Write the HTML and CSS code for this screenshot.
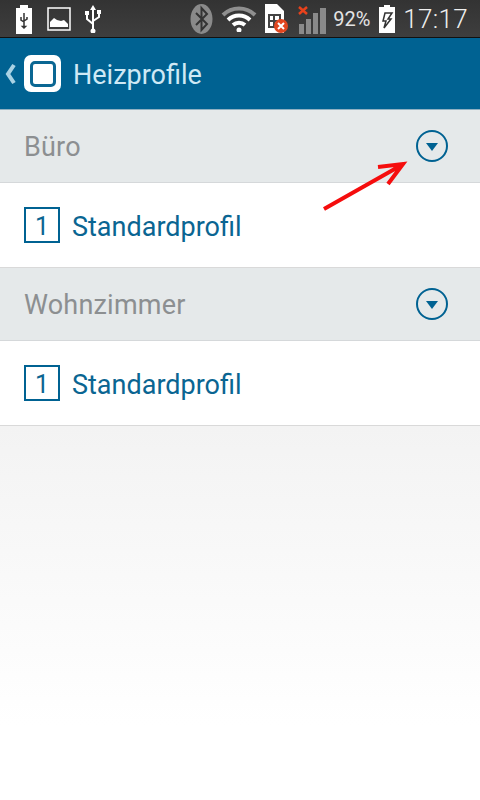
FILE: index.html
```html
<!DOCTYPE html>
<html lang="de">
<head>
    <meta charset="UTF-8">
    <meta name="viewport" content="width=device-width, initial-scale=1.0">
    <title>Heizprofile</title>
    <link rel="stylesheet" href="styles.css">
</head>
<body>
    <div class="statusbar">
        <div class="status-left">
            <svg width="18" height="30" viewBox="0 0 18 30"><path d="M5 1h8v3h4v26H1V4h4z" fill="#fff"/><path d="M9 9v15M9 24l-1.500-1.500h3zM6 13v3l3 2M12 13v2l-3 2" stroke="#333" stroke-width="1.500" fill="none"/></svg>
            <svg width="24" height="24" viewBox="0 0 24 24"><rect x="1" y="1" width="22" height="22" fill="none" stroke="#fff" stroke-width="1.500"/><path d="M3 20v-5l4-4 3 2 4 1 3-1 4 4v3z" fill="#fff"/></svg>
            <svg width="16" height="28" viewBox="0 0 16 28"><path d="M8 2v24M8 19L2 14V9M8 16l6-4V8" stroke="#fff" stroke-width="2" fill="none"/><path d="M8 0l-3 5h6z" fill="#fff"/><rect x="0" y="6" width="4" height="4" fill="#fff"/><rect x="12" y="5" width="4" height="4" fill="#fff"/><circle cx="8" cy="26" r="2.500" fill="#fff"/></svg>
        </div>
        <div class="status-right">
            <svg class="bt" width="23" height="30" viewBox="0 0 23 30"><ellipse cx="11.500" cy="15" rx="11" ry="15" fill="#8a8a8a"/><path d="M6 9l11 11-5.500 6V4l5.500 6L6 21" stroke="#333" stroke-width="2" fill="none"/></svg>
            <svg width="36" height="26" viewBox="0 0 36 26"><path d="M2 9a23 23 0 0 1 32 0" stroke="#8f8f8f" stroke-width="4" fill="none"/><path d="M7 14a16 16 0 0 1 22 0" stroke="#fff" stroke-width="4" fill="none"/><path d="M12 19a9 9 0 0 1 12 0" stroke="#fff" stroke-width="4" fill="none"/><circle cx="18" cy="24" r="2.500" fill="#fff"/></svg>
            <svg width="26" height="30" viewBox="0 0 26 30"><path d="M1 0h12l7 7v22H1z" fill="#fff"/><path d="M5 11h11v12H5zM5 17h11M10 11v12" stroke="#444" stroke-width="2" fill="none"/><circle cx="17" cy="22" r="7" fill="#e2461f"/><path d="M14 19l6 6M20 19l-6 6" stroke="#fff" stroke-width="2"/></svg>
            <svg class="signal" width="29" height="30" viewBox="0 0 29 30"><g fill="#8a8a8a"><rect x="1" y="20" width="5" height="10"/><rect x="8" y="15" width="5" height="15"/><rect x="15" y="9" width="5" height="21"/><rect x="22" y="4" width="6" height="26"/></g><path d="M1 3l8 7M9 3l-8 7" stroke="#e8421c" stroke-width="2.500"/></svg>
            <span class="battery-pct">92%</span>
            <svg width="16" height="28" viewBox="0 0 16 28"><path d="M5 0h6v2h5v26H0V2h5z" fill="#fff"/><path d="M6 8h7l-4 6h3l-7 9 2-7H4z" fill="none" stroke="#333" stroke-width="1.500"/></svg>
            <span class="clock">17:17</span>
        </div>
    </div>

    <header class="appbar">
        <svg class="back" width="12" height="22" viewBox="0 0 12 22"><path d="M9 2L3 11l6 9" stroke="#a9d2e4" stroke-width="4" fill="none"/></svg>
        <div class="logo"><div class="logo-inner"></div></div>
        <h1>Heizprofile</h1>
    </header>

    <section class="room">
        <span class="room-name">Büro</span>
        <span class="toggle"></span>
    </section>
    <div class="profile">
        <span class="profile-num">1</span>
        <span class="profile-name">Standardprofil</span>
    </div>

    <section class="room">
        <span class="room-name">Wohnzimmer</span>
        <span class="toggle"></span>
    </section>
    <div class="profile">
        <span class="profile-num">1</span>
        <span class="profile-name">Standardprofil</span>
    </div>

    <div class="filler"></div>

    <!-- annotation arrow drawn on the screenshot -->
    <svg class="arrow" width="90" height="56" viewBox="0 0 90 56"><path d="M2 49L78 6M56 7L81 4 66 24" stroke="#f50d0d" stroke-width="4" fill="none"/></svg>
</body>
</html>
```
FILE: styles.css
```css
html, body {
    margin: 0;
    height: 800px;
    overflow: hidden;
}
body {
    position: relative;
    display: flex;
    flex-direction: column;
    font-family: Roboto, sans-serif;
    background-color: #fff;
}
.statusbar {
    height: 37px;
    flex: none;
    display: flex;
    justify-content: space-between;
    align-items: center;
    background: linear-gradient(#333, #3e3e3e);
    border-bottom: 1px solid #111;
    color: #fff;
}
.status-left {
    display: flex;
    align-items: center;
    gap: 14px;
    padding-left: 15px;
}
.status-right {
    display: flex;
    align-items: center;
    gap: 7px;
    padding-right: 12px;
}
.bt {
    margin-right: 1px;
}
.signal {
    margin-left: 1px;
    margin-right: -1px;
}
.battery-pct {
    font-size: 20px;
    color: #e4e4e4;
    margin-right: 2px;
}
.clock {
    font-size: 26px;
    font-weight: 300;
    letter-spacing: 0.3px;
    color: #eee;
    margin-left: 1px;
}
.appbar {
    height: 71px;
    flex: none;
    display: flex;
    align-items: center;
    background-color: #006292;
    border-bottom: 1px solid #8fb0c2;
    padding-left: 5px;
}
.back {
    margin-right: 7px;
}
.logo {
    width: 37px;
    height: 37px;
    box-sizing: border-box;
    background-color: #fff;
    border-radius: 7px;
    display: flex;
    align-items: center;
    justify-content: center;
}
.logo-inner {
    width: 26px;
    height: 26px;
    box-sizing: border-box;
    border: 3px solid #0b6793;
    border-radius: 5px;
}
.appbar h1 {
    margin: 0 0 0 12px;
    padding-top: 3px;
    font-size: 27px;
    font-weight: 400;
    color: #cfe9f5;
}
.room {
    height: 72px;
    flex: none;
    display: flex;
    align-items: center;
    justify-content: space-between;
    padding: 0 32px 0 24px;
    background-color: #e5e9ea;
    border-bottom: 1px solid #d5d8da;
    font-size: 27px;
    color: #8c8f91;
}
.room-name {
    padding-top: 2px;
    letter-spacing: 0.2px;
}
.toggle {
    width: 32px;
    height: 32px;
    box-sizing: border-box;
    border: 2px solid #006292;
    border-radius: 50%;
    position: relative;
}
.toggle::after {
    content: "";
    position: absolute;
    left: 8px;
    top: 11px;
    border-left: 6px solid transparent;
    border-right: 6px solid transparent;
    border-top: 8px solid #006292;
}
.profile {
    height: 84px;
    flex: none;
    display: flex;
    align-items: center;
    gap: 12px;
    padding-left: 24px;
    background-color: #fff;
    border-bottom: 1px solid #d9d9d9;
    font-size: 27px;
    color: #0a6592;
}
.profile-name {
    padding-top: 3px;
}
.profile-num {
    width: 36px;
    height: 36px;
    box-sizing: border-box;
    padding-top: 2px;
    border: 2px solid #006292;
    display: flex;
    align-items: center;
    justify-content: center;
    font-size: 25px;
}
.filler {
    flex: 1;
    background: linear-gradient(#f3f3f3, #fff 80%);
}
.arrow {
    position: absolute;
    left: 322px;
    top: 160px;
}
```
